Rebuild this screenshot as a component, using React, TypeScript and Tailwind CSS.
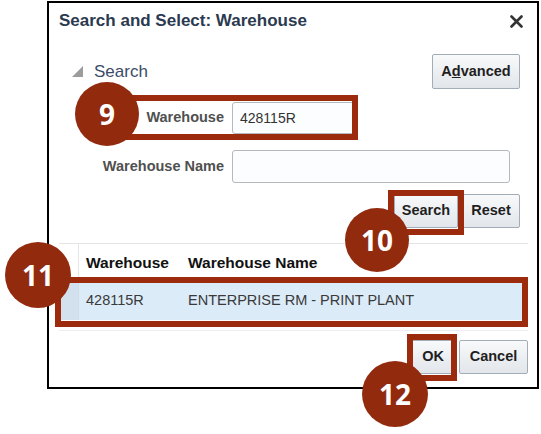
import React from 'react';

function Btn({ children, className = '' }: { children: React.ReactNode; className?: string }) {
  return (
    <div
      className={`flex items-center justify-center rounded-[2px] border border-[#a3adb8] bg-gradient-to-b from-[#f8f9fa] to-[#e2e6ea] text-[14.5px] font-bold text-[#1f1f1f] ${className}`}
    >
      {children}
    </div>
  );
}

function Marker({ n, className }: { n: string; className: string }) {
  return (
    <div
      className={`absolute flex items-center justify-center rounded-full bg-[#922a0e] text-[28px] font-bold text-white ${className}`}
      style={{ fontFamily: '"Open Sans", "Liberation Sans", sans-serif' }}
    >
      {n}
    </div>
  );
}

export default function App() {
  return (
    <div
      className="relative h-[434px] w-[541px] overflow-hidden bg-white pt-[1px]"
      style={{ fontFamily: '"Liberation Sans", Arial, sans-serif' }}
    >
      {/* dialog */}
      <div className="ml-[47px] flex h-[388px] w-[492px] flex-col border-2 border-black bg-white pt-[8px]">
        <div className="flex h-[20px] items-center justify-between pl-[10px] pr-[14px]">
          <span className="text-[17px] font-bold leading-[20px] text-[#2c3a50]">Search and Select: Warehouse</span>
          <svg width="13" height="13" viewBox="0 0 13 13">
            <path d="M1.5 1.5 L11.5 11.5 M11.5 1.5 L1.5 11.5" stroke="#333" strokeWidth="2.6" strokeLinecap="round" />
          </svg>
        </div>

        <div className="mt-[23px] flex h-[35px] items-center justify-between pl-[23px] pr-[17px]">
          <div className="flex items-center gap-[11px]">
            <svg width="11" height="11" viewBox="0 0 11 11">
              <polygon points="11,0 11,11 0,11" fill="#9c9c9c" />
            </svg>
            <span className="text-[17px] leading-[20px] text-[#3d4c66]">Search</span>
          </div>
          <Btn className="h-[35px] w-[88px]">
            <span>
              A<span className="underline">d</span>vanced
            </span>
          </Btn>
        </div>

        <div className="mt-[13px] flex h-[32px] items-center">
          <div className="w-[175px] text-right text-[14.5px] font-bold text-[#505050]">Warehouse</div>
          <div className="ml-[8px] flex h-[32px] w-[126px] items-center rounded-[3px] border border-[#b4b9bf] bg-[#fcfdfe] pl-[7px] text-[14px] text-[#333]">
            428115R
          </div>
        </div>

        <div className="mt-[16px] flex h-[33px] items-center">
          <div className="w-[175px] text-right text-[14.5px] font-bold text-[#505050]">Warehouse Name</div>
          <div className="ml-[8px] h-[33px] w-[278px] rounded-[3px] border border-[#b4b9bf] bg-[#fcfdfe]" />
        </div>

        <div className="mt-[11px] flex h-[34px] justify-end gap-[4px] pr-[17px]">
          <Btn className="h-[34px] w-[64px]">Search</Btn>
          <Btn className="h-[34px] w-[58px]">Reset</Btn>
        </div>

        {/* results table */}
        <div className="ml-[10px] mr-[9px] mt-[15px] border-t border-[#e2e4e6]">
          <div className="flex h-[38px] items-center">
            <div className="h-full w-[20px] border-r border-[#e4e6e8]" />
            <div className="w-[102px] pl-[7px] text-[15.5px] font-bold text-[#111]">Warehouse</div>
            <div className="pl-[7px] text-[15.5px] font-bold text-[#111]">Warehouse Name</div>
          </div>
          <div className="flex h-[38px] items-center bg-[#dcebf8] text-[14.5px] text-[#3a3a3a]">
            <div className="h-full w-[20px] border-r border-[#cfdbe6] bg-[#d3e1ee]" />
            <div className="w-[102px] pl-[7px]">428115R</div>
            <div className="pl-[7px]">ENTERPRISE RM - PRINT PLANT</div>
          </div>
          <div className="mt-[10px] border-t border-[#eceef0]" />
        </div>

        <div className="mt-[9px] flex h-[34px] justify-end gap-[4px] pr-[9px]">
          <Btn className="h-[34px] w-[44px]">OK</Btn>
          <Btn className="h-[34px] w-[69px]">Cancel</Btn>
        </div>
      </div>

      {/* annotation boxes */}
      <div className="absolute left-[118px] top-[95px] h-[45px] w-[240px] border-[6px] border-[#9b2b0c]" />
      <div className="absolute left-[388px] top-[190px] h-[45px] w-[76px] border-[6px] border-[#9b2b0c]" />
      <div className="absolute left-[55px] top-[277px] h-[50px] w-[473px] border-[6px] border-[#9b2b0c]" />
      <div className="absolute left-[407px] top-[334px] h-[47px] w-[50px] border-[6px] border-[#9b2b0c]" />

      {/* annotation markers */}
      <Marker n="9" className="left-[75px] top-[82px] h-[64px] w-[64px]" />
      <Marker n="10" className="left-[345px] top-[208px] h-[64px] w-[64px]" />
      <Marker n="11" className="left-[5px] top-[242px] h-[66px] w-[66px]" />
      <Marker n="12" className="left-[362px] top-[361px] h-[66px] w-[66px]" />
    </div>
  );
}
